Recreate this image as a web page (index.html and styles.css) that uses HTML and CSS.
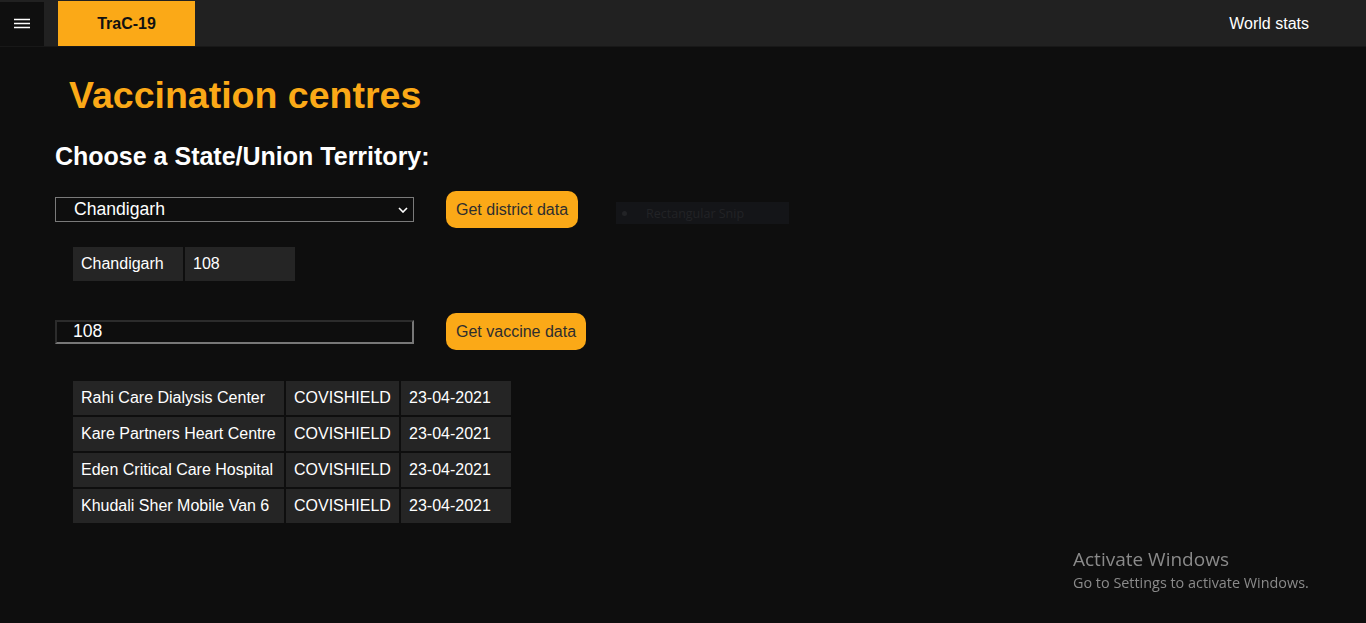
FILE: index.html
```html
<!DOCTYPE html>
<html lang="en">
<head>
<meta charset="utf-8">
<title>TraC-19 — Vaccination centres</title>
<link rel="stylesheet" href="styles.css">
</head>
<body>
<header class="navbar">
  <button class="menu-btn" aria-label="menu">
    <svg width="16" height="12" viewBox="0 0 16 12"><path d="M0 1.5H16M0 5.5H16M0 9.5H16" stroke="#fff" stroke-width="1.4"/></svg>
  </button>
  <a class="brand">TraC-19</a>
  <nav class="nav-right"><a class="nav-link">World stats</a></nav>
</header>

<main class="content">
  <h1 class="title">Vaccination centres</h1>
  <h2 class="subtitle">Choose a State/Union Territory:</h2>

  <div class="row">
    <div class="select-wrap">
      <select class="field select">
        <option>Chandigarh</option>
      </select>
      <svg class="chevron" width="10" height="6" viewBox="0 0 10 6"><path d="M1 1L5 5L9 1" fill="none" stroke="#fff" stroke-width="1.6"/></svg>
    </div>
    <button class="btn">Get district data</button>
    <div class="snip"><span class="snip-dot"></span><span>Rectangular Snip</span></div>
  </div>

  <table class="data district">
    <tr><td class="w110">Chandigarh</td><td class="w110">108</td></tr>
  </table>

  <div class="row row-vaccine">
    <input class="field input" type="text" value="108">
    <button class="btn">Get vaccine data</button>
  </div>

  <table class="data centres">
    <tr><td class="c1">Rahi Care Dialysis Center</td><td class="c2">COVISHIELD</td><td class="c3">23-04-2021</td></tr>
    <tr><td class="c1">Kare Partners Heart Centre</td><td class="c2">COVISHIELD</td><td class="c3">23-04-2021</td></tr>
    <tr><td class="c1">Eden Critical Care Hospital</td><td class="c2">COVISHIELD</td><td class="c3">23-04-2021</td></tr>
    <tr><td class="c1">Khudali Sher Mobile Van 6</td><td class="c2">COVISHIELD</td><td class="c3">23-04-2021</td></tr>
  </table>
</main>

<div class="activate">
  <div class="act-title">Activate Windows</div>
  <div class="act-sub">Go to Settings to activate Windows.</div>
</div>
</body>
</html>
```

FILE: styles.css
```css
* { box-sizing: border-box; }

html, body {
  margin: 0;
  background: #0e0e0e;
  color: #fff;
  font-family: "Liberation Sans", Arial, sans-serif;
  font-size: 16px;
  min-height: 623px;
}

.navbar {
  display: flex;
  align-items: stretch;
  height: 47px;
  padding-top: 1px;
  background: #212121;
  border-bottom: 1px solid #181818;
}

.menu-btn {
  width: 44px;
  margin-top: 1px;
  border: 0;
  padding: 0;
  background: #0f0f0f;
  display: flex;
  align-items: center;
  justify-content: center;
  cursor: pointer;
}

.brand {
  margin-left: 14px;
  width: 137px;
  background: #fba917;
  color: #111;
  font-weight: bold;
  font-size: 16px;
  display: flex;
  align-items: center;
  justify-content: center;
}

.nav-right {
  margin-left: auto;
  display: flex;
  align-items: center;
  padding-right: 57px;
}

.nav-link {
  color: #fff;
  font-size: 16px;
}

.content {
  padding-left: 55px;
}

.title {
  margin: 27px 0 0 14px;
  font-size: 37.5px;
  font-weight: bold;
  color: #fba917;
}

.subtitle {
  margin: 25px 0 0;
  font-size: 25px;
  font-weight: bold;
  color: #fff;
}

.row {
  display: flex;
  align-items: center;
  margin-top: 20px;
}

.select-wrap {
  position: relative;
  width: 359px;
  height: 25px;
}

.field {
  width: 359px;
  height: 25px;
  background: #0e0e0e;
  color: #fff;
  font-family: "Liberation Sans", Arial, sans-serif;
  font-size: 17.6px;
  outline: none;
}

.select {
  appearance: none;
  -webkit-appearance: none;
  border: 1px solid #7a7a7a;
  padding: 0 0 0 18px;
  line-height: 23px;
}

.chevron {
  position: absolute;
  right: 6px;
  top: 10px;
  pointer-events: none;
}

.input {
  height: 24px;
  border-style: solid;
  border-width: 2px;
  border-color: #2c2c2c #777 #777 #2c2c2c;
  padding: 0 0 0 16px;
}

.btn {
  margin-left: 32px;
  background: #fba917;
  color: #2e2e2e;
  border: 0;
  border-radius: 10px;
  font-family: "Liberation Sans", Arial, sans-serif;
  font-size: 16px;
  line-height: 19px;
  padding: 9px 10px;
  cursor: pointer;
}

.snip {
  margin-left: 38px;
  margin-top: 7px;
  width: 173px;
  height: 22px;
  background: #141518;
  color: #222326;
  font-family: "Open Sans", "Noto Sans", sans-serif;
  font-size: 12.5px;
  display: flex;
  align-items: center;
  gap: 19px;
  padding-left: 6px;
}

.snip-dot {
  width: 5px;
  height: 5px;
  border-radius: 50%;
  background: #222326;
}

.data {
  border-collapse: separate;
  border-spacing: 2px;
  margin-left: 16px;
}

.data td {
  background: #252525;
  color: #fff;
  font-size: 16px;
  line-height: 18px;
  padding: 8px 8px;
  white-space: nowrap;
}

.district {
  margin-top: 17px;
}

.w110 { width: 110px; }

.row-vaccine {
  margin-top: 30px;
}

.centres {
  margin-top: 29px;
}

.c1 { width: 211px; }
.c2 { width: 113px; }
.c3 { width: 110px; }

.activate {
  position: fixed;
  left: 1073px;
  top: 546px;
  color: #8a8a8a;
  font-family: "Open Sans", "Noto Sans", sans-serif;
}

.act-title {
  font-size: 19px;
  line-height: 27px;
}

.act-sub {
  font-size: 14.4px;
  line-height: 19px;
}
```
